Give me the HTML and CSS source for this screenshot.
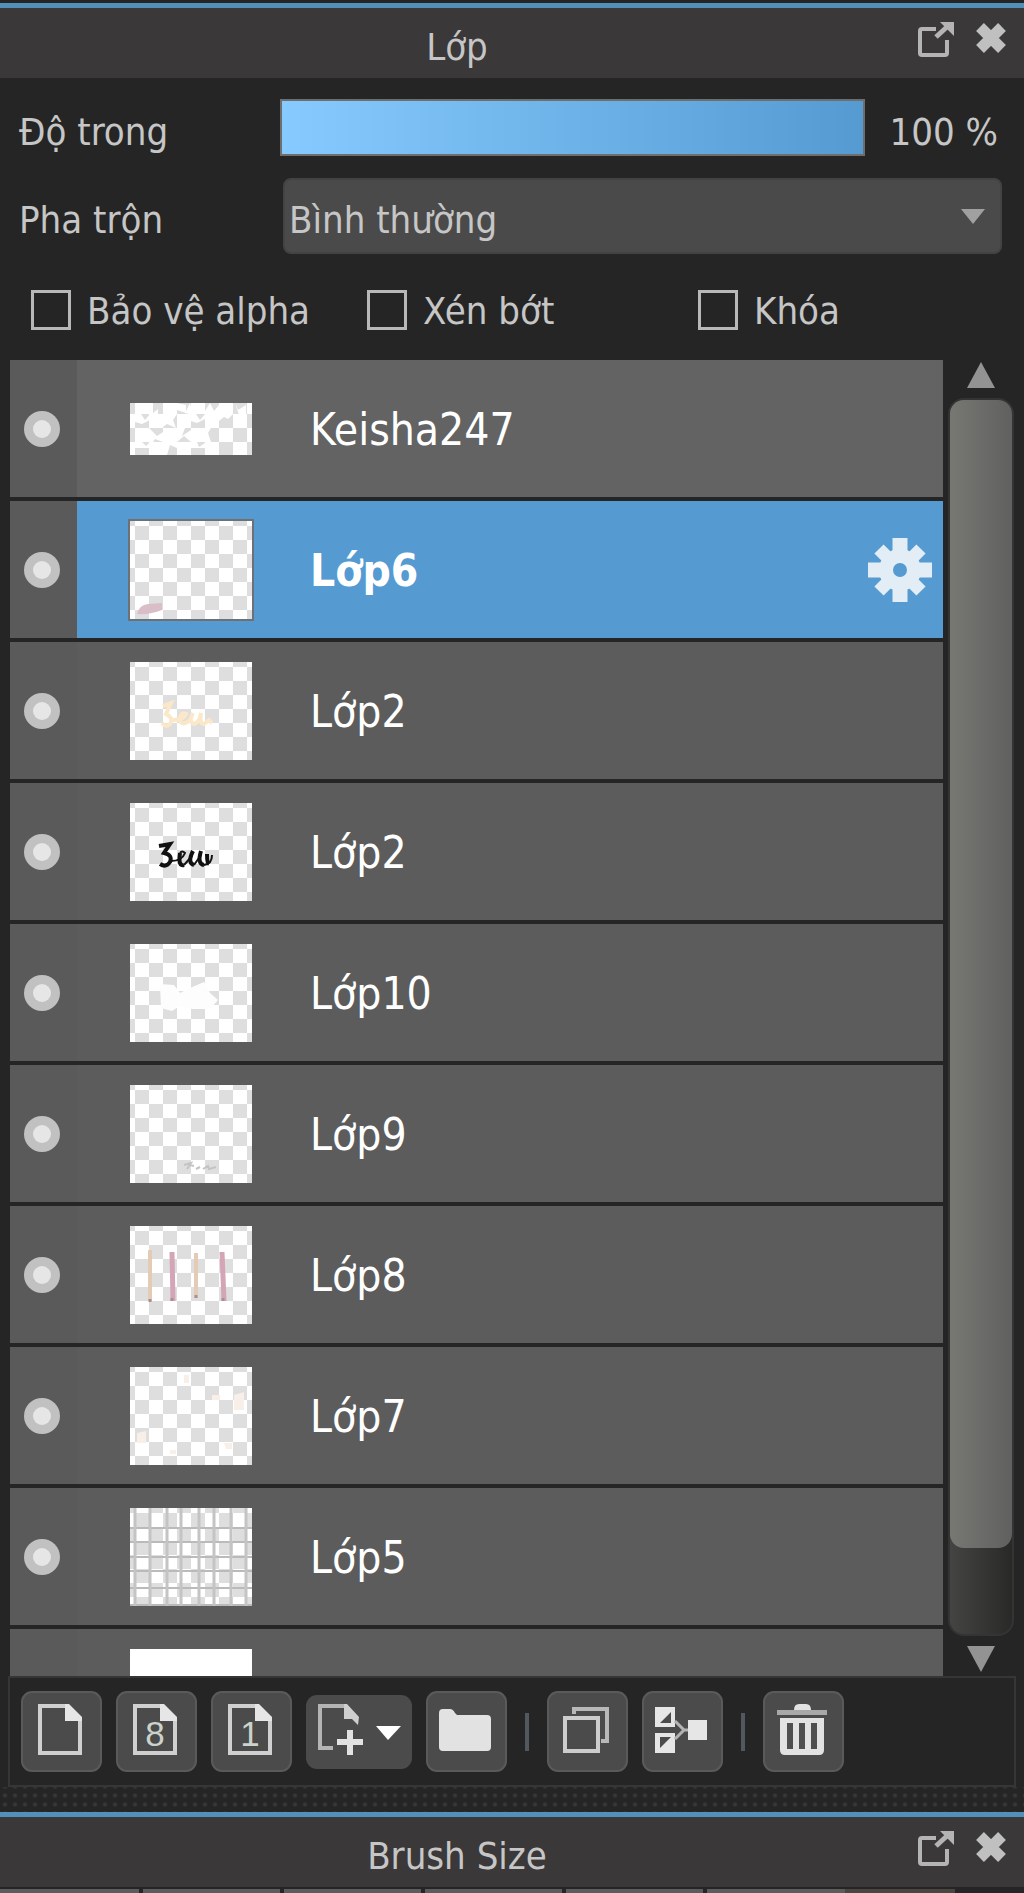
FILE: index.html
```html
<!DOCTYPE html>
<html lang="vi">
<head>
  <meta charset="UTF-8">
  <meta name="viewport" content="width=device-width, initial-scale=1.0">
  <title>Lớp</title>
  <link rel="stylesheet" href="styles.css">
</head>
<body>

  <!-- Shared shapes -->
  <svg class="defs" width="0" height="0" aria-hidden="true">
    <defs>
      <pattern id="checker" x="5" y="5" width="28" height="28" patternUnits="userSpaceOnUse">
        <rect width="28" height="28" fill="#fff"/>
        <path d="M0 0h14v14H0zM14 14h14v14H14z" fill="#dedede"/>
      </pattern>
      <symbol id="popout" viewBox="0 0 36 36">
        <path d="M18 8H4Q2 8 2 10V32Q2 34 4 34H27Q29 34 29 32V19" fill="none" stroke="#b4b4b4" stroke-width="4"/>
        <path d="M18 16L30 5" stroke="#b4b4b4" stroke-width="5"/>
        <path d="M22 1H36V15Z" fill="#b4b4b4"/>
      </symbol>
      <symbol id="close" viewBox="0 0 34 34">
        <path d="M6 6L28 28M28 6L6 28" stroke="#c0c0c0" stroke-width="11"/>
      </symbol>
      <symbol id="eye" viewBox="0 0 36 36">
        <circle cx="18" cy="18" r="18" fill="#c1c1c1"/>
        <circle cx="18" cy="18" r="9" fill="#e6e6e6"/>
      </symbol>
      <symbol id="page" viewBox="0 0 46 52">
        <path d="M30 2H3V49H43V15" fill="none" stroke="#d0d0d0" stroke-width="4"/>
        <path d="M28 0H32L45 13V17H28Z" fill="#e6e6e6"/>
      </symbol>
    </defs>
  </svg>

  <!-- Layer panel -->
  <section class="panel">
    <header class="panel-header">
      <h2>Lớp</h2>
      <button type="button" class="icon-btn" aria-label="Popout"><svg width="36" height="36"><use href="#popout"/></svg></button>
      <button type="button" class="icon-btn" aria-label="Close"><svg width="34" height="34"><use href="#close"/></svg></button>
    </header>

    <div class="options">
      <div class="option-row">
        <label for="opacity">Độ trong</label>
        <input type="range" id="opacity" min="0" max="100" value="100">
        <output for="opacity">100 %</output>
      </div>
      <div class="option-row">
        <label for="blend">Pha trộn</label>
        <div class="select-box">
          <select id="blend">
            <option>Bình thường</option>
          </select>
          <svg class="select-arrow" width="24" height="15" viewBox="0 0 24 15"><path d="M0 0H24L12 15Z" fill="#a0a0a0"/></svg>
        </div>
      </div>
      <div class="check-row">
        <label><input type="checkbox"> <span>Bảo vệ alpha</span></label>
        <label><input type="checkbox"> <span>Xén bớt</span></label>
        <label><input type="checkbox"> <span>Khóa</span></label>
      </div>
    </div>

    <div class="list-area">
      <ul class="layers">
        <li class="layer folder">
          <button type="button" class="eye" aria-label="Keisha247"><svg width="36" height="36"><use href="#eye"/></svg></button>
          <div class="layer-body">
            <svg class="thumb" width="122" height="52" viewBox="0 22 122 52">
              <rect y="22" width="122" height="52" fill="url(#checker)"/>
              <path transform="translate(0 -14)" d="M18 36h5v10l5-4v6h-9zM47 36l9 2v8l-9-3zM60 36l3 12-8-2zM80 36l4 8 5-6v10H75V44zM105 36l3 7 8-5v10h-7zM5 47h6l4 6 5-6v6l-8 4-7-2zM33 47h14l-4 6 3 8-9-4-4 3zM61 47h5l4 6 5-6v5l-8 4-6-2zM89 47h14l-5 5-4-2-5 4zM19 61l8 8 6-4v10l-8-3-2 3h-4zM47 61h8l-3 8 9-6v12l-7-6-7 6zM75 61h6l-3 5 3 9h-6zM5 75h7l4 4 3-3v5H5zM33 75h14v6l-7-3-3 10h-4zM61 75h6l2 5 6-4v5H61z" fill="#fff"/>
            </svg>
            <span class="name">Keisha247</span>
          </div>
        </li>
        <li class="layer selected">
          <button type="button" class="eye" aria-label="Lớp6"><svg width="36" height="36"><use href="#eye"/></svg></button>
          <div class="layer-body">
            <svg class="thumb" width="122" height="98" viewBox="0 0 122 98">
              <rect width="122" height="98" fill="url(#checker)"/>
              <path d="M7 93Q9 84 18 83L32 82V89Q20 94 7 93Z" fill="#d9bec8"/>
            </svg>
            <span class="name">Lớp6</span>
            <button type="button" class="icon-btn gear" aria-label="Settings">
              <svg width="64" height="64" viewBox="-32 -32 64 64">
                <g stroke="#e2edf6">
                  <path d="M0 -32V-12M0 12V32M-32 0H-12M12 0H32" stroke-width="15"/>
                  <path d="M-21 -21L-10 -10M10 10L21 21M21 -21L10 -10M-10 10L-21 21" stroke-width="13"/>
                  <circle r="14" fill="none" stroke-width="14"/>
                </g>
              </svg>
            </button>
          </div>
        </li>
        <li class="layer">
          <button type="button" class="eye" aria-label="Lớp2"><svg width="36" height="36"><use href="#eye"/></svg></button>
          <div class="layer-body">
            <svg class="thumb" width="122" height="98" viewBox="0 0 122 98">
              <rect width="122" height="98" fill="url(#checker)"/>
              <path d="M33 44L41 41L36 52Q44 56 40 62Q36 66 32 61M43 58Q54 58 56 52Q50 50 50 58Q52 65 60 58M63 51Q58 60 64 62Q70 60 71 51Q69 62 74 62L79 58L82 61" fill="none" stroke="#fbe8c8" stroke-width="4"/>
            </svg>
            <span class="name">Lớp2</span>
          </div>
        </li>
        <li class="layer">
          <button type="button" class="eye" aria-label="Lớp2"><svg width="36" height="36"><use href="#eye"/></svg></button>
          <div class="layer-body">
            <svg class="thumb" width="122" height="98" viewBox="0 0 122 98">
              <rect width="122" height="98" fill="url(#checker)"/>
              <g fill="none" stroke="#111">
                <path d="M29 43L40 41L34 50Q43 52 40 59Q36 65 30 61M50 50Q48 64 54 62M63 48Q57 60 64 62M71 48Q67 61 74 62M77 51Q77 60 79 61" stroke-width="4"/>
                <path d="M41 58Q52 58 55 50Q52 47 50 50M54 62L62 53M64 62L71 52M74 62Q82 61 82 52" stroke-width="2"/>
              </g>
            </svg>
            <span class="name">Lớp2</span>
          </div>
        </li>
        <li class="layer">
          <button type="button" class="eye" aria-label="Lớp10"><svg width="36" height="36"><use href="#eye"/></svg></button>
          <div class="layer-body">
            <svg class="thumb" width="122" height="98" viewBox="0 0 122 98">
              <rect width="122" height="98" fill="url(#checker)"/>
              <path d="M30 40L44 41L50 49L60 44L74 38L80 49L88 56L80 65H62L50 62L42 67L31 64Z" fill="#fdfdfd"/>
            </svg>
            <span class="name">Lớp10</span>
          </div>
        </li>
        <li class="layer">
          <button type="button" class="eye" aria-label="Lớp9"><svg width="36" height="36"><use href="#eye"/></svg></button>
          <div class="layer-body">
            <svg class="thumb" width="122" height="98" viewBox="0 0 122 98">
              <rect width="122" height="98" fill="url(#checker)"/>
              <path d="M54 80L61 78L57 84M60 80L64 81M66 84L70 82M73 84L78 81L79 84L86 82" fill="none" stroke="#c4c4c4" stroke-width="2"/>
            </svg>
            <span class="name">Lớp9</span>
          </div>
        </li>
        <li class="layer">
          <button type="button" class="eye" aria-label="Lớp8"><svg width="36" height="36"><use href="#eye"/></svg></button>
          <div class="layer-body">
            <svg class="thumb" width="122" height="98" viewBox="0 0 122 98">
              <rect width="122" height="98" fill="url(#checker)"/>
              <path d="M20 24V75M66 27V72" stroke="#e3cbb6" stroke-width="4"/>
              <path d="M42 26L43 75M92 26L94 75" stroke="#d3a5b6" stroke-width="5"/>
              <path d="M20 73v3M42 72v3M66 69v3M93 72v3" stroke="#a98f8f" stroke-width="3"/>
            </svg>
            <span class="name">Lớp8</span>
          </div>
        </li>
        <li class="layer">
          <button type="button" class="eye" aria-label="Lớp7"><svg width="36" height="36"><use href="#eye"/></svg></button>
          <div class="layer-body">
            <svg class="thumb" width="122" height="98" viewBox="0 0 122 98">
              <rect width="122" height="98" fill="url(#checker)"/>
              <path d="M54 8h5v8h-5zM82 28h8v5h-8zM104 28l10-3v18h-10zM7 66l9-2v12H7zM40 83h6v4h-6zM94 76h8v6h-6z" fill="#f7efe8"/>
            </svg>
            <span class="name">Lớp7</span>
          </div>
        </li>
        <li class="layer">
          <button type="button" class="eye" aria-label="Lớp5"><svg width="36" height="36"><use href="#eye"/></svg></button>
          <div class="layer-body">
            <svg class="thumb" width="122" height="98" viewBox="0 0 122 98">
              <rect width="122" height="98" fill="url(#checker)"/>
              <path d="M0 20H122M0 34H122M0 49H122M0 63H122M0 80H122M0 97H122" stroke="#bababa" stroke-width="2"/>
              <path d="M5 0V98M20 0V98M37 0V98M51 0V98M69 0V98M84 0V98M101 0V98M116 0V98" stroke="#c4c4c4" stroke-width="3"/>
            </svg>
            <span class="name">Lớp5</span>
          </div>
        </li>
        <li class="layer">
          <div class="eye"></div>
          <div class="layer-body">
            <svg class="thumb" width="122" height="98"><rect width="122" height="98" fill="#fff"/></svg>
          </div>
        </li>
      </ul>

      <div class="scrollbar">
        <button type="button" class="icon-btn" aria-label="Scroll up"><svg width="28" height="26" viewBox="0 0 28 26"><path d="M14 0L28 26H0Z" fill="#939393"/></svg></button>
        <div class="track"><div class="handle"></div></div>
        <button type="button" class="icon-btn" aria-label="Scroll down"><svg width="28" height="26" viewBox="0 0 28 26"><path d="M0 0H28L14 26Z" fill="#939393"/></svg></button>
      </div>
    </div>

    <!-- Layer tools -->
    <div class="toolbar">
      <button type="button" class="tool" aria-label="New layer">
        <svg width="46" height="52"><use href="#page"/></svg>
      </button>
      <button type="button" class="tool" aria-label="New 8 bit layer">
        <svg width="46" height="52"><use href="#page"/><text x="23" y="42">8</text></svg>
      </button>
      <button type="button" class="tool" aria-label="New 1 bit layer">
        <svg width="46" height="52"><use href="#page"/><text x="23" y="42">1</text></svg>
      </button>
      <button type="button" class="tool wide" aria-label="Add layer">
        <svg width="84" height="52" viewBox="0 0 84 52">
          <path d="M28 2H2V44H15" fill="none" stroke="#b4b4b4" stroke-width="4"/>
          <path d="M26 0H29L41 13L40 21L34 15H26Z" fill="#cfcfcf"/>
          <path d="M32 26V51M19 38H45" stroke="#e2e2e2" stroke-width="6"/>
          <path d="M58 22H83L70 36Z" fill="#fff"/>
        </svg>
      </button>
      <button type="button" class="tool" aria-label="New folder">
        <svg width="52" height="42" viewBox="0 0 52 42"><path d="M0 4Q0 0 4 0H11Q14 0 16 4L18 6H48Q52 6 52 10V38Q52 42 48 42H4Q0 42 0 38Z" fill="#e2e2e2"/></svg>
      </button>
      <span class="divider"></span>
      <button type="button" class="tool" aria-label="Duplicate layer">
        <svg width="46" height="46" viewBox="0 0 46 46" fill="none" stroke-width="4">
          <path d="M11 7V2H44V34H38" stroke="#b8b8b8"/>
          <rect x="2" y="11" width="33" height="33" stroke="#cdcdcd"/>
        </svg>
      </button>
      <button type="button" class="tool" aria-label="Merge layer">
        <svg width="52" height="46" viewBox="0 0 52 46">
          <path d="M0 0H20V20H0ZM0 26H20V46H0ZM33 13H52V33H33Z" fill="#e6e6e6"/>
          <path d="M16 5V16H5ZM5 30H16L5 41Z" fill="#4b4b4b"/>
          <path d="M20 14L29 23L20 32M27 23H33" fill="none" stroke="#b4b4b4" stroke-width="3"/>
        </svg>
      </button>
      <span class="divider"></span>
      <button type="button" class="tool" aria-label="Delete layer">
        <svg width="50" height="52" viewBox="0 0 50 52">
          <path d="M0 6H50V11H0Z" fill="#a8a8a8"/>
          <path d="M17 6Q17 0 22 0H29Q34 0 34 6Z" fill="#e2e2e2"/>
          <path d="M3 14H47V46Q47 51 42 51H8Q3 51 3 46Z" fill="#e2e2e2"/>
          <path d="M13 19V45M25 19V45M37 19V45" stroke="#4f4f4f" stroke-width="6"/>
        </svg>
      </button>
    </div>
  </section>

  <div class="grip"></div>

  <!-- Brush size panel -->
  <section class="panel">
    <header class="panel-header">
      <h2>Brush Size</h2>
      <button type="button" class="icon-btn" aria-label="Popout"><svg width="36" height="36"><use href="#popout"/></svg></button>
      <button type="button" class="icon-btn" aria-label="Close"><svg width="34" height="34"><use href="#close"/></svg></button>
    </header>
    <div class="brushes">
      <span></span><span></span><span></span><span></span><span></span><span></span>
    </div>
  </section>

</body>
</html>
```
FILE: styles.css
```css
* {
  box-sizing: border-box;
}
body {
  margin: 0;
  padding-top: 3px;
  background-color: #252525;
  color: #c6c6c6;
  font-family: "DejaVu Sans Condensed", "DejaVu Sans", sans-serif;
  font-size: 38px;
  line-height: 44px;
}
svg {
  display: block;
}
.defs {
  position: absolute;
}
button {
  padding: 0;
  border: none;
  background: none;
  cursor: pointer;
}

/* Panel title bar */
.panel-header {
  display: flex;
  gap: 20px;
  padding: 13px 16px 9px;
  border-top: 5px solid #528fb9;
  background-color: #3a3838;
}
.panel-header h2 {
  flex: 1;
  margin: 0;
  padding-top: 4px;
  font-size: 38px;
  font-weight: normal;
  text-align: center;
}
.icon-btn {
  display: block;
  align-self: flex-start;
}

/* Opacity, blending and check boxes */
.options {
  padding: 21px 22px 27px 19px;
}
.option-row {
  display: grid;
  grid-template-columns: 261px 1fr auto;
  align-items: center;
  margin-bottom: 22px;
}
.option-row label,
.option-row output {
  padding-top: 8px;
}
input[type="range"] {
  -webkit-appearance: none;
  appearance: none;
  width: 100%;
  height: 57px;
  margin: 0;
  border: 2px solid #6e6e6e;
  background: linear-gradient(to right, #86caff, #559bd1);
}
input[type="range"]::-webkit-slider-thumb {
  -webkit-appearance: none;
  width: 1px;
  height: 50px;
}
output {
  padding: 0 4px 0 24px;
}
.select-box {
  display: grid;
  grid-column: 2 / 4;
  align-items: center;
  margin-left: 3px;
}
.select-box > * {
  grid-area: 1 / 1;
}
select {
  -webkit-appearance: none;
  appearance: none;
  width: 100%;
  height: 76px;
  padding: 8px 4px 0;
  border: 2px solid #434343;
  border-radius: 8px;
  background-color: #4a4a4a;
  color: #c6c6c6;
  font: inherit;
}
.select-arrow {
  justify-self: end;
  margin-right: 17px;
  pointer-events: none;
}
.check-row {
  display: grid;
  grid-template-columns: 336px 331px 1fr;
  padding: 10px 0 0 12px;
}
.check-row label {
  display: flex;
  align-items: center;
  gap: 16px;
}
.check-row span {
  padding-top: 3px;
}
input[type="checkbox"] {
  -webkit-appearance: none;
  appearance: none;
  width: 40px;
  height: 40px;
  margin: 0;
  border: 3px solid #b8b8b8;
}

/* Layer list */
.list-area {
  display: flex;
  gap: 5px;
  height: 1316px;
  padding: 0 10px;
}
.layers {
  flex: 1;
  display: flex;
  flex-direction: column;
  gap: 4px;
  margin: 0;
  padding: 0;
  overflow: hidden;
  list-style: none;
}
.layer {
  display: flex;
  flex: none;
  height: 137px;
  background-color: #5c5c5c;
}
.eye {
  display: grid;
  place-items: center;
  width: 67px;
  padding-right: 3px;
  background-color: #5a5a5a;
}
.layer-body {
  flex: 1;
  display: flex;
  align-items: center;
  padding: 0 11px 0 53px;
}
.folder .layer-body {
  background-color: #636363;
}
.selected .layer-body {
  background-color: #559bd1;
}
.selected .thumb {
  outline: 2px solid #6c7077;
}
.name {
  flex: 1;
  margin-left: 58px;
  padding-top: 2px;
  color: #fff;
  font-size: 44px;
}
.selected .name {
  font-weight: bold;
}
.gear {
  align-self: center;
}

/* Scrollbar */
.scrollbar {
  display: flex;
  flex-direction: column;
  align-items: center;
  gap: 10px;
  width: 66px;
  padding: 2px 0 4px;
}
.scrollbar .icon-btn {
  align-self: center;
}
.track {
  flex: 1;
  width: 100%;
  border: 2px solid #343434;
  border-radius: 16px;
  background: linear-gradient(to right, #444442, #292927);
}
.handle {
  height: 93%;
  border-radius: 14px;
  background: linear-gradient(to right, #777773, #606060);
}

/* Toolbar */
.toolbar {
  display: flex;
  align-items: center;
  gap: 14px;
  margin: 0 8px;
  padding: 13px 11px;
  border: 2px solid #363636;
}
.tool {
  display: grid;
  place-items: center;
  width: 81px;
  height: 81px;
  padding: 0 3px 3px 0;
  border: 2px solid #5a5a5a;
  border-radius: 11px;
  background-color: #4b4b4b;
}
.tool text {
  fill: #cbd3cb;
  font-family: "Liberation Sans", Arial, sans-serif;
  font-size: 35px;
  text-anchor: middle;
}
.wide {
  width: 106px;
  height: 74px;
  padding: 0 0 3px 2px;
  border: none;
}
.divider {
  width: 4px;
  height: 38px;
  margin: 0 4px;
  background-color: #53585f;
}

.grip {
  height: 25px;
  background: radial-gradient(circle, #383838 1px, transparent 3px) 0 4px / 10px 9px;
}

/* Brush tiles */
.brushes {
  display: grid;
  grid-template-columns: 139px repeat(4, 137px) 248px;
  gap: 4px;
  padding-top: 2px;
}
.brushes span {
  height: 5px;
  background-color: #5c5c5c;
}
.brushes span:last-child {
  border-right: 110px solid #4a4743;
}
```
